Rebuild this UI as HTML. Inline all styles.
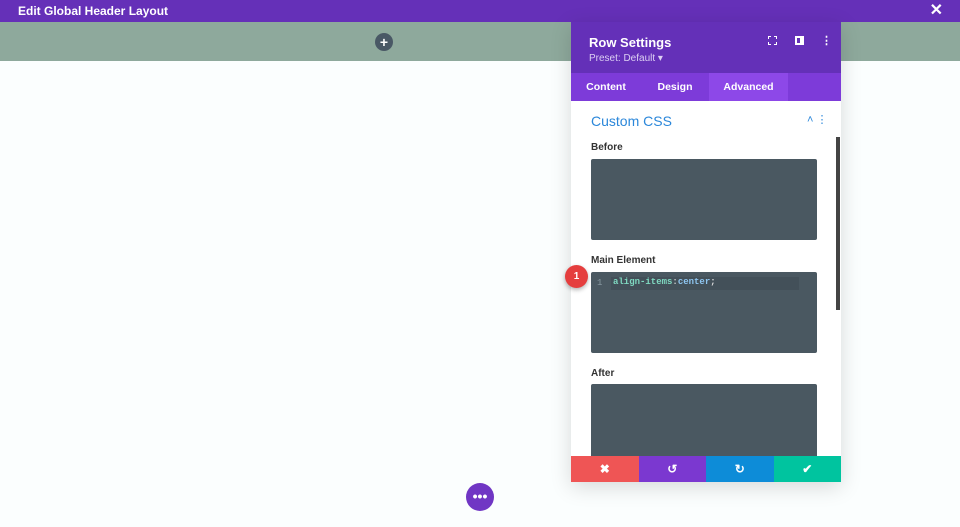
<!DOCTYPE html>
<html><head><style>
*{margin:0;padding:0;box-sizing:border-box}
body{width:960px;height:527px;background:#fbfefe;font-family:"Liberation Sans",sans-serif;position:relative;overflow:hidden}
.top{position:absolute;left:0;top:0;width:960px;height:22px;background:#6530b8;color:#fff;font-size:12px;font-weight:bold;line-height:22px;padding-left:18px}
.x{position:absolute;right:17px;top:0;color:#fff;font-size:16px;line-height:22px}
.hdr{position:absolute;left:0;top:22px;width:960px;height:39px;background:#8ea99c}
.plus{position:absolute;left:375px;top:33px;width:18px;height:18px;border-radius:50%;background:#495865;color:#fff;font-size:14px;line-height:18px;text-align:center;font-weight:bold}
.panel{position:absolute;left:571px;top:22px;width:270px;height:460px;background:#fff;box-shadow:0 5px 20px rgba(0,0,0,.15)}
.ph{height:51px;background:#6430b8;color:#fff;padding:13px 0 0 18px}
.ph b{font-size:13px;display:block}
.ph span{font-size:10px;color:#ddd0f3;display:block;margin-top:3px}
.tabs{height:28px;background:#7d3bd9;position:relative;font-size:10.5px;font-weight:bold;color:#fff}
.tabs div{position:absolute;top:0;line-height:28px;text-align:center}
.sec{color:#2b87da;font-size:14px;position:absolute;left:20px;top:91px}
.lbl{position:absolute;left:20px;font-size:10px;color:#333;font-weight:bold}
.box{position:absolute;left:20px;width:226px;height:81px;background:#4a5861;border-radius:2px}
.btns{position:absolute;left:0;top:434px;width:270px;height:26px;display:flex}
.btns div{flex:1;color:#fff;text-align:center;line-height:26px;font-size:12px;font-weight:bold}
.scroll{position:absolute;left:265px;top:115px;width:4px;height:173px;background:#444}
</style></head><body>
<div class="top">Edit Global Header Layout<span class="x">✕</span></div>
<div class="hdr"></div>
<div class="plus">+</div>
<div class="panel">
 <div class="ph"><b>Row Settings</b><span>Preset: Default ▾</span>
  <div style="position:absolute;left:197px;top:14px;width:9px;height:9px;border:1.5px dashed #fff"></div>
  <div style="position:absolute;left:224px;top:14px;width:9px;height:9px;border:2px solid #fff;border-right-width:4px"></div>
  <div style="position:absolute;left:250px;top:12px;color:#fff;font-size:11px;font-weight:bold">⋮</div>
 </div>
 <div class="tabs"><div style="left:0;width:70px">Content</div><div style="left:70px;width:68px">Design</div><div style="left:138px;width:79px;background:#8d48e8">Advanced</div></div>
 <div class="sec">Custom CSS</div>
 <div style="position:absolute;left:236px;top:91px;color:#2b87da;font-size:11px">˄ ⋮</div>
 <div class="scroll"></div>
 <div class="lbl" style="top:120px">Before</div>
 <div class="box" style="top:137px"></div>
 <div class="lbl" style="top:233px">Main Element</div>
 <div class="box" style="top:250px">
  <div style="position:absolute;left:20px;top:5px;width:188px;height:13px;background:#435059"></div>
  <div style="position:absolute;left:6px;top:6px;font-family:'Liberation Mono',monospace;font-size:9px;color:#8a99a3">1</div>
  <div style="position:absolute;left:22px;top:5px;font-family:'Liberation Mono',monospace;font-size:9px;font-weight:bold;color:#7fd8c0">align-items<span style="color:#ccc">:</span><span style="color:#8ec5f0">center</span><span style="color:#ddd">;</span></div>
 </div>
 <div class="lbl" style="top:346px">After</div>
 <div class="box" style="top:362px;height:72px;border-radius:2px 2px 0 0"></div>
 <div class="btns"><div style="background:#ef5555">✖</div><div style="background:#7b38d0">↺</div><div style="background:#0d8cd8">↻</div><div style="background:#00c49f">✔</div></div>
</div>
<div style="position:absolute;left:565px;top:265px;width:23px;height:23px;border-radius:50%;background:#e53e3e;color:#fff;font-size:10px;font-weight:bold;text-align:center;line-height:23px;box-shadow:0 2px 4px rgba(0,0,0,.3)">1</div>
<div style="position:absolute;left:466px;top:483px;width:28px;height:28px;border-radius:50%;background:#7036c4;color:#fff;text-align:center;line-height:26px;font-size:14px;font-weight:bold">•••</div>
</body></html>
